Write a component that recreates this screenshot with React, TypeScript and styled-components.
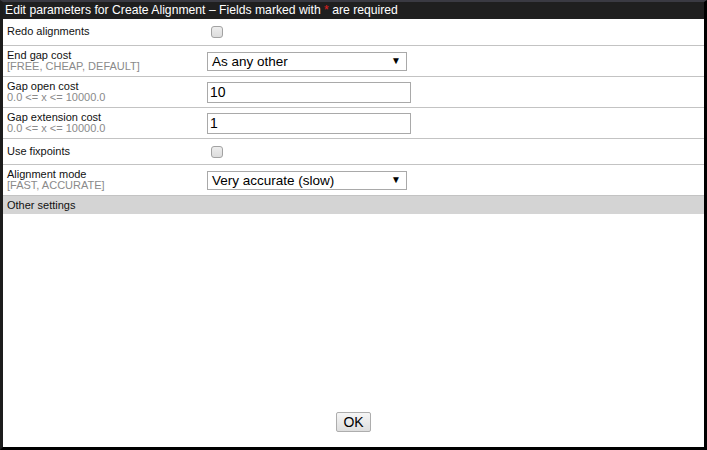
import React from "react";
import styled, { createGlobalStyle } from "styled-components";

const Global = createGlobalStyle`
  html, body { margin: 0; padding: 0; background: #000; }
  body { font-family: "Liberation Sans", Arial, sans-serif; }
  * { box-sizing: border-box; }
`;

const Frame = styled.div`
  width: 707px;
  height: 450px;
  display: flex;
  flex-direction: column;
  background: #fff;
  border-top: 2px solid #3a3a42;
  border-left: 3px solid #1c1c1c;
  border-right: 3px solid #000;
  border-bottom: 3px solid #000;
`;

const TitleBar = styled.div`
  height: 17px;
  flex: none;
  background: #1f1f1f;
  color: #fff;
  font-size: 12.2px;
  line-height: 17px;
  padding-left: 2px;
  white-space: nowrap;
`;

const Req = styled.span`
  color: #e02020;
`;

const Body = styled.div`
  flex: 1;
  display: flex;
  flex-direction: column;
`;

const Row = styled.div<{ $h: number }>`
  display: grid;
  grid-template-columns: 204px 1fr;
  align-items: center;
  height: ${(p) => p.$h}px;
  border-bottom: 1px solid #c3c3c3;
`;

const LabelCell = styled.div`
  padding-left: 4px;
  font-size: 11px;
  line-height: 11.5px;
  color: #111;
`;

const Hint = styled.div`
  color: #8a8a8a;
`;

const ControlCell = styled.div`
  display: flex;
  align-items: center;
`;

const Check = styled.span`
  display: inline-block;
  width: 12px;
  height: 12px;
  margin-left: 4px;
  border: 1px solid #a2a2a2;
  border-radius: 3px;
  background: linear-gradient(#ededed, #dcdcdc);
`;

const SelectBox = styled.div`
  width: 200px;
  height: 19px;
  border: 1px solid #a9a9a9;
  display: flex;
  align-items: center;
  justify-content: space-between;
  padding: 0 5px 0 4px;
  font-size: 13.5px;
  color: #000;
  background: #fff;
`;

const Arrow = styled.span`
  font-size: 10px;
  line-height: 1;
`;

const TextInput = styled.input`
  width: 204px;
  height: 21px;
  border: 1px solid #a9a9a9;
  padding: 0 2px;
  margin: 0;
  font-family: "Liberation Sans", Arial, sans-serif;
  font-size: 14px;
  color: #000;
  outline: none;
`;

const SectionBar = styled.div`
  height: 18px;
  background: #d4d4d4;
  font-size: 11px;
  line-height: 18px;
  padding-left: 4px;
  color: #111;
`;

const Spacer = styled.div`
  flex: 1;
`;

const Footer = styled.div`
  display: flex;
  justify-content: center;
  padding-bottom: 15px;
`;

const OkButton = styled.button`
  width: 35px;
  height: 20px;
  padding: 0;
  font-family: "Liberation Sans", Arial, sans-serif;
  font-size: 14px;
  color: #000;
  border: 1px solid #adadad;
  border-radius: 2px;
  background: linear-gradient(#f6f6f6, #dedede);
`;

type Field =
  | { kind: "check"; label: string; h: number }
  | { kind: "select"; label: string; hint: string; value: string; h: number }
  | { kind: "input"; label: string; hint: string; value: string; h: number };

const fields: Field[] = [
  { kind: "check", label: "Redo alignments", h: 27 },
  { kind: "select", label: "End gap cost", hint: "[FREE, CHEAP, DEFAULT]", value: "As any other", h: 31 },
  { kind: "input", label: "Gap open cost", hint: "0.0 <= x <= 10000.0", value: "10", h: 31 },
  { kind: "input", label: "Gap extension cost", hint: "0.0 <= x <= 10000.0", value: "1", h: 31 },
  { kind: "check", label: "Use fixpoints", h: 26 },
  { kind: "select", label: "Alignment mode", hint: "[FAST, ACCURATE]", value: "Very accurate (slow)", h: 31 },
];

export default function App() {
  return (
    <>
      <Global />
      <Frame>
        <TitleBar>
          Edit parameters for Create Alignment – Fields marked with <Req>*</Req> are required
        </TitleBar>
        <Body>
          {fields.map((f) => (
            <Row key={f.label} $h={f.h}>
              <LabelCell>
                {f.label}
                {f.kind !== "check" && <Hint>{f.hint}</Hint>}
              </LabelCell>
              <ControlCell>
                {f.kind === "check" && <Check />}
                {f.kind === "select" && (
                  <SelectBox>
                    <span>{f.value}</span>
                    <Arrow>▼</Arrow>
                  </SelectBox>
                )}
                {f.kind === "input" && <TextInput defaultValue={f.value} />}
              </ControlCell>
            </Row>
          ))}
          <SectionBar>Other settings</SectionBar>
          <Spacer />
          <Footer>
            <OkButton>OK</OkButton>
          </Footer>
        </Body>
      </Frame>
    </>
  );
}
